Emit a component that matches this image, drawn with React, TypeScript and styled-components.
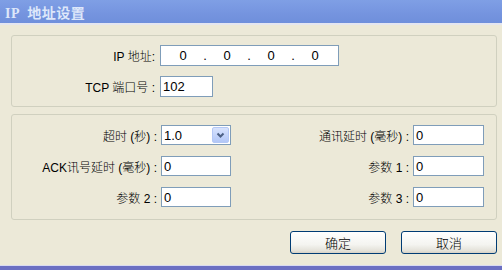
import React from "react";
import styled, { createGlobalStyle } from "styled-components";

const GlobalStyle = createGlobalStyle`
  html, body {
    margin: 0;
    padding: 0;
    background: #ece9d8;
  }
  * {
    box-sizing: border-box;
  }
`;

const Window = styled.div`
  width: 502px;
  height: 270px;
  display: flex;
  flex-direction: column;
  background: #ece9d8;
  font-family: "Liberation Sans", "Noto Sans CJK SC", sans-serif;
  font-size: 12px;
  color: #000;
  overflow: hidden;
`;

const TitleBar = styled.div`
  height: 25px;
  flex: none;
  display: flex;
  align-items: center;
  padding-left: 5px;
  background: linear-gradient(#7f9fe5, #7594df 60%, #6f8fdb);
  border-bottom: 2px solid #e4e6f0;
`;

const Title = styled.span`
  white-space: pre;
  font-family: "Liberation Serif", "Noto Sans CJK SC", serif;
  font-weight: bold;
  font-size: 14px;
  color: #dde7fa;
  letter-spacing: 0.5px;
`;

const Body = styled.div`
  flex: 1;
  display: flex;
  flex-direction: column;
  padding: 10px 5px 0 11px;
`;

const Group = styled.div<{ $height: number; $top: number; $gap: number }>`
  height: ${(p) => p.$height}px;
  border: 1px solid #d0d0bf;
  border-radius: 3px;
  padding-top: ${(p) => p.$top}px;
  display: flex;
  flex-direction: column;
  gap: ${(p) => p.$gap}px;
  & + & {
    margin-top: 7px;
  }
`;

const Row = styled.div<{ $h: number }>`
  display: flex;
  align-items: center;
  height: ${(p) => p.$h}px;
`;

const Grid = styled.div`
  display: grid;
  grid-template-columns: 149px 70px 182px 71px;
  grid-auto-rows: 20px;
  row-gap: 11px;
  align-items: center;
`;

const Label = styled.span<{ $w?: number; $pad?: number }>`
  ${(p) => (p.$w ? `width: ${p.$w}px;` : "")}
  flex: none;
  text-align: right;
  padding-right: ${(p) => p.$pad ?? 4}px;
  white-space: pre;
  font-weight: 300;
`;

const Field = styled.div<{ $w?: number }>`
  ${(p) => (p.$w ? `width: ${p.$w}px;` : "width: 100%;")}
  height: 100%;
  background: #fff;
  border: 1px solid #7f9db9;
  display: flex;
  align-items: center;
  padding-left: 2px;
  font-size: 13px;
`;

const IpField = styled(Field)`
  padding-left: 6px;
`;

const Octet = styled.span`
  width: 32px;
  text-align: center;
`;

const Dot = styled.span`
  width: 12px;
  text-align: center;
`;

const Combo = styled(Field)`
  padding: 1px;
  justify-content: space-between;
`;

const ComboText = styled.span`
  padding-left: 1px;
`;

const DropButton = styled.div`
  width: 17px;
  height: 16px;
  border: 1px solid #b4c8f6;
  border-radius: 2px;
  background: linear-gradient(#d8e3fd, #c1d2fa 60%, #b2c7f7);
  display: flex;
  align-items: center;
  justify-content: center;
`;

const Buttons = styled.div`
  display: flex;
  justify-content: flex-end;
  gap: 15px;
  margin-top: 11px;
`;

const Button = styled.button`
  width: 96px;
  height: 23px;
  border: 1px solid #003c74;
  border-radius: 3px;
  background: linear-gradient(#ffffff, #f4f4f0 60%, #e3e1d8 90%, #d6d0c5);
  font-family: "Noto Sans CJK SC", sans-serif;
  font-size: 13px;
  font-weight: 300;
  color: #000;
  padding: 0;
`;

const BottomEdge = styled.div`
  height: 5px;
  flex: none;
  border-top: 1px solid #d9daf0;
  background: #6b6fc2;
`;

const Chevron = () => (
  <svg width="9" height="7" viewBox="0 0 9 7">
    <path d="M1.5 1.5 L4.5 4.5 L7.5 1.5" fill="none" stroke="#4d6185" strokeWidth="2" />
  </svg>
);

export default function App() {
  return (
    <Window>
      <GlobalStyle />
      <TitleBar>
        <Title>IP  地址设置</Title>
      </TitleBar>
      <Body>
        <Group $height={72} $top={9} $gap={10}>
          <Row $h={21}>
            <Label $w={148} $pad={5}>IP 地址:</Label>
            <IpField $w={179}>
              <Octet>0</Octet>
              <Dot>.</Dot>
              <Octet>0</Octet>
              <Dot>.</Dot>
              <Octet>0</Octet>
              <Dot>.</Dot>
              <Octet>0</Octet>
            </IpField>
          </Row>
          <Row $h={21}>
            <Label $w={148} $pad={5}>TCP 端口号 :</Label>
            <Field $w={53}>102</Field>
          </Row>
        </Group>
        <Group $height={106} $top={10} $gap={0}>
          <Grid>
            <Label>超时 (秒) :</Label>
            <Combo>
              <ComboText>1.0</ComboText>
              <DropButton>
                <Chevron />
              </DropButton>
            </Combo>
            <Label>通讯延时 (毫秒) :</Label>
            <Field>0</Field>

            <Label>ACK讯号延时 (毫秒) :</Label>
            <Field>0</Field>
            <Label>参数 1 :</Label>
            <Field>0</Field>

            <Label>参数 2 :</Label>
            <Field>0</Field>
            <Label>参数 3 :</Label>
            <Field>0</Field>
          </Grid>
        </Group>
        <Buttons>
          <Button>确定</Button>
          <Button>取消</Button>
        </Buttons>
      </Body>
      <BottomEdge />
    </Window>
  );
}
